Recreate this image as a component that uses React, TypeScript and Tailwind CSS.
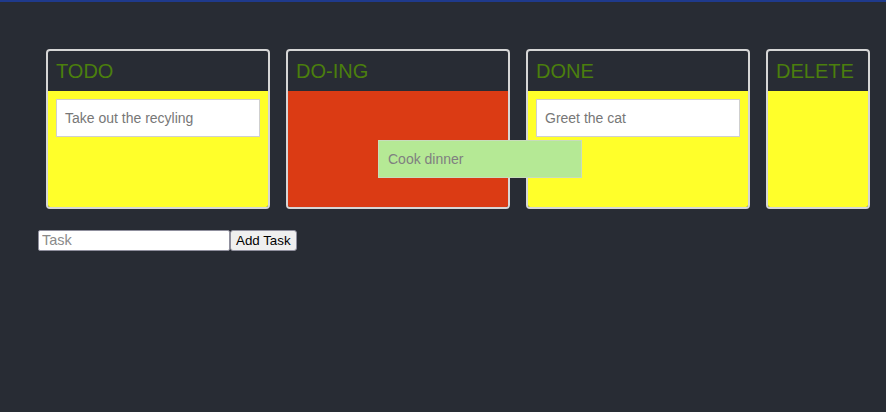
import type { ReactNode } from "react";

interface Task {
  id: number;
  text: string;
}

interface Column {
  title: string;
  width: string;
  body: string;
  tasks: Task[];
}

const columns: Column[] = [
  {
    title: "TODO",
    width: "w-[224px]",
    body: "bg-[#ffff2a]",
    tasks: [{ id: 1, text: "Take out the recyling" }],
  },
  { title: "DO-ING", width: "w-[224px]", body: "bg-[#db3b14]", tasks: [] },
  {
    title: "DONE",
    width: "w-[224px]",
    body: "bg-[#ffff2a]",
    tasks: [{ id: 2, text: "Greet the cat" }],
  },
  { title: "DELETE", width: "w-[104px]", body: "bg-[#ffff2a]", tasks: [] },
];

function Card({ children }: { children: ReactNode }) {
  return (
    <div className="h-[38px] flex items-center px-2 bg-white border border-[#cfcfcf] text-sm text-[#777777]">
      {children}
    </div>
  );
}

function Lane({ col, children }: { col: Column; children?: ReactNode }) {
  return (
    <div
      className={`${col.width} shrink-0 h-[160px] flex flex-col border-2 border-[#d6d6d6] rounded-[4px] overflow-hidden`}
    >
      <div className="h-10 shrink-0 flex items-center px-[8px] text-[20px] text-[#4b7f0d]">
        {col.title}
      </div>
      <div className={`relative flex-1 flex flex-col gap-2 p-2 ${col.body}`}>
        {col.tasks.map((t) => (
          <Card key={t.id}>{t.text}</Card>
        ))}
        {children}
      </div>
    </div>
  );
}

export default function App() {
  return (
    <div
      className="relative min-h-[412px] bg-[#282c34] overflow-hidden"
      style={{ fontFamily: '"Liberation Sans", Arial, sans-serif' }}
    >
      <div className="h-[2px] bg-[#1f3a8c]" />
      <div className="px-[38px] pt-[47px]">
        <div className="flex gap-4 pl-2">
          {columns.map((c) => (
            <Lane key={c.title} col={c} />
          ))}
        </div>
        <div className="flex items-center mt-[21px]">
          <input
            type="text"
            placeholder="Task"
            className="w-[192px] h-[21px] px-[3px] bg-white border border-[#8f8f9d] rounded-[2px] text-[14.5px] text-black placeholder:text-[#8a8a8a] outline-none"
          />
          <button
            type="button"
            className="h-[21px] px-[5px] bg-[#efefef] border border-[#8f8f9d] rounded-[3px] text-[13.33px] text-black leading-none"
          >
            Add Task
          </button>
        </div>
      </div>
      {/* card being dragged */}
      <div className="absolute left-[378px] top-[140px] w-[204px] h-[38px] flex items-center px-[9px] bg-[#b5e995] border border-[#c8dcbc] text-sm text-[#808080]">
        Cook dinner
      </div>
    </div>
  );
}
